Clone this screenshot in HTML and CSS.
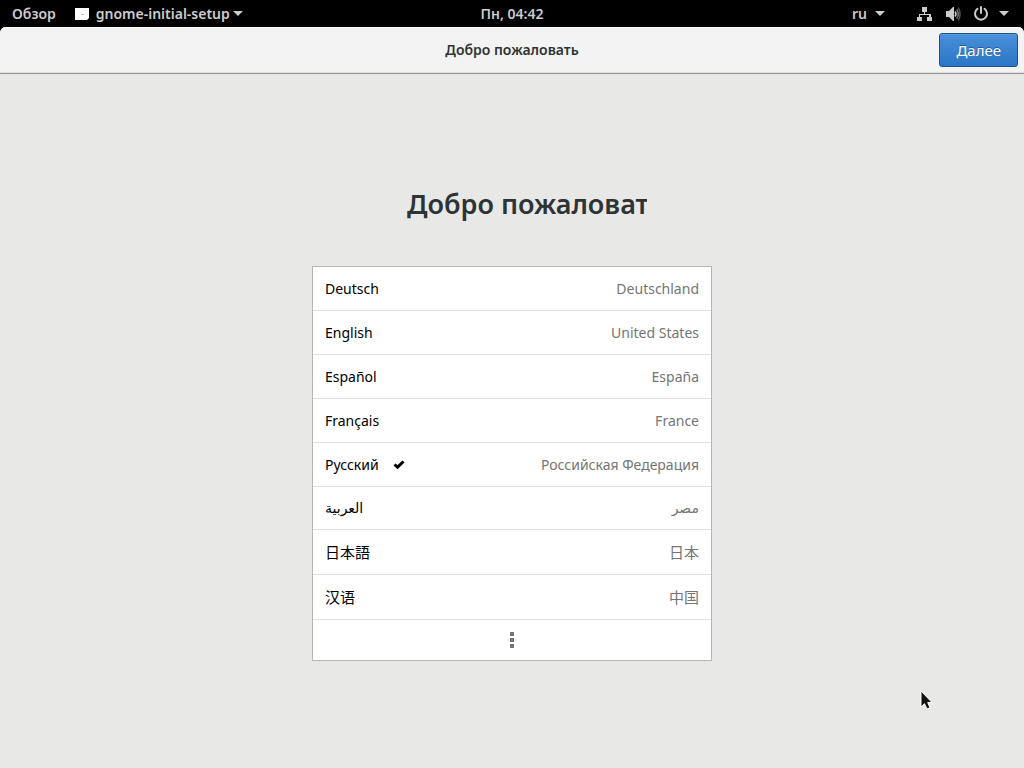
FILE: index.html
```html
<!DOCTYPE html>
<html lang="ru">
<head>
<meta charset="utf-8">
<title>Добро пожаловать</title>
<meta name="viewport" content="width=device-width, initial-scale=1">
<link rel="stylesheet" href="styles.css">
</head>
<body>
<nav class="panel">
  <div class="panel-group panel-left">
    <button class="panel-button" type="button">Обзор</button>
    <button class="panel-button app-menu" type="button">
      <svg class="app-icon" viewBox="0 0 14 12" width="14" height="12" aria-hidden="true"><path d="M0 0h14v10l-2 2H0z" fill="#fff"/><path d="M6 6h3v1H6z" fill="#bbb"/></svg>
      <span>gnome-initial-setup</span>
      <svg class="arrow" viewBox="0 0 10 5" width="10" height="5" aria-hidden="true"><path d="M0 0h10L5 5z"/></svg>
    </button>
  </div>
  <button class="panel-button clock" type="button">Пн, 04:42</button>
  <div class="panel-group panel-right">
    <button class="panel-button keyboard" type="button">
      <span>ru</span>
      <svg class="arrow" viewBox="0 0 10 5" width="10" height="5" aria-hidden="true"><path d="M0 0h10L5 5z"/></svg>
    </button>
    <button class="panel-button status" type="button" aria-label="Система">
      <svg viewBox="0 0 16 16" width="16" height="16" aria-hidden="true"><path d="M5 1h5v5H8v2h6v3h1v4h-5v-4h2V9H3v2h2v4H0v-4h2V8h5V6H5z"/></svg>
      <svg viewBox="0 0 16 16" width="16" height="16" aria-hidden="true"><path d="M1 5h3l4-4h1v14H8l-4-4H1z"/><path d="M10 5.500q2 2.500 0 5" fill="none" stroke="#ccc" stroke-width="1.500"/><path d="M11.800 3.500q3 4.500 0 9" fill="none" stroke="#777" stroke-width="1.500"/><path d="M13.300 1.500q3.500 6.500 0 13" fill="none" stroke="#555" stroke-width="1.500"/></svg>
      <svg viewBox="0 0 16 16" width="16" height="16" aria-hidden="true"><path d="M4.500 2.800a6 6 0 1 0 7 0M8 1v6" fill="none" stroke="#ccc" stroke-width="2" stroke-linecap="round"/></svg>
      <svg class="arrow" viewBox="0 0 10 5" width="10" height="5" aria-hidden="true"><path d="M0 0h10L5 5z"/></svg>
    </button>
  </div>
</nav>
<div class="window">
  <header class="titlebar">
    <div class="title">Добро пожаловать</div>
    <button class="next" type="button">Далее</button>
  </header>
  <main class="page">
    <h1 class="welcome">Добро пожаловать</h1>
    <div class="languages">
      <button class="language" type="button"><span lang="de">Deutsch</span><span class="country" lang="de">Deutschland</span></button>
      <button class="language" type="button"><span lang="en">English</span><span class="country" lang="en">United States</span></button>
      <button class="language" type="button"><span lang="es">Español</span><span class="country" lang="es">España</span></button>
      <button class="language" type="button"><span lang="fr">Français</span><span class="country" lang="fr">France</span></button>
      <button class="language" type="button" aria-pressed="true"><span>Русский</span><svg class="check" viewBox="0 0 12 9" width="12" height="9" aria-hidden="true"><path d="M1.500 4.500l3 2.700 6-5.700" fill="none" stroke="#000" stroke-width="3"/></svg><span class="country">Российская Федерация</span></button>
      <button class="language arabic" type="button"><span lang="ar">العربية</span><span class="country" lang="ar">مصر</span></button>
      <button class="language cjk" type="button"><span lang="ja">日本語</span><span class="country" lang="ja">日本</span></button>
      <button class="language cjk" type="button"><span lang="zh-CN">汉语</span><span class="country" lang="zh-CN">中国</span></button>
      <button class="language more" type="button" aria-label="Ещё"><svg viewBox="0 0 4 16" width="4" height="16" aria-hidden="true"><path d="M0 0h4v4H0zM0 6h4v4H0zM0 12h4v4H0z"/></svg></button>
    </div>
  </main>
</div>
<svg class="pointer" viewBox="0 0 14 22" width="14" height="22" aria-hidden="true"><path d="M1 1v16l3.500-3.300L7 19l3-1.300L7.700 12.500H12z" fill="#111" stroke="#fff"/></svg>
</body>
</html>
```
FILE: styles.css
```css
* {
  box-sizing: border-box;
}

body {
  margin: 0;
  min-height: 100vh;
  display: flex;
  flex-direction: column;
  background: #000;
  color: #2e3436;
  font-family: "Noto Sans", "DejaVu Sans", "Noto Sans CJK SC", sans-serif;
  font-size: 14px;
  line-height: 20px;
}

button {
  margin: 0;
  font: inherit;
  color: inherit;
  background: none;
  border: 0;
}

.panel {
  display: grid;
  grid-template-columns: 1fr auto 1fr;
  align-items: center;
  height: 27px;
  color: #ccc;
  fill: #ccc;
  font-weight: 600;
}

.panel-group {
  display: flex;
  align-items: center;
}

.panel-left {
  padding-left: 12px;
  gap: 19px;
}

.panel-right {
  justify-content: flex-end;
  padding-right: 15px;
  gap: 32px;
}

.panel-button {
  display: flex;
  align-items: center;
  padding: 0;
}

.app-icon {
  margin-right: 7px;
}

.app-menu .arrow {
  margin-left: 3px;
}

.keyboard {
  gap: 8px;
}

.status {
  gap: 12px;
}

.status .arrow {
  margin-left: -2px;
}

.window {
  flex: 1;
  display: flex;
  flex-direction: column;
  background: #e8e8e6;
  border-radius: 6px 6px 0 0;
  overflow: hidden;
}

.titlebar {
  display: grid;
  grid-template-columns: 1fr auto 1fr;
  align-items: center;
  height: 47px;
  padding: 0 6px;
  background: #f3f3f3;
  border-bottom: 1px solid #92928e;
  box-shadow: inset 0 1px #fff, inset 0 -1px #e0e0de;
}

.title {
  grid-column: 2;
  font-weight: 600;
}

.next {
  justify-self: end;
  height: 34px;
  padding: 0 16px;
  color: #fff;
  font-size: 15px;
  background: linear-gradient(#4a90d9, #2a76c6);
  border: 1px solid #1c5187;
  border-radius: 3px;
  box-shadow: inset 0 1px #5b9cde;
  text-shadow: 0 -1px #1f5c99;
}

.page {
  flex: 1;
  display: flex;
  flex-direction: column;
  align-items: center;
  padding: 110px 16px 16px;
}

.welcome {
  width: 270px;
  margin: 0 0 42px;
  padding-left: 30px;
  overflow: hidden;
  white-space: nowrap;
  font-size: 27px;
  font-weight: 600;
  line-height: 40px;
}

.languages {
  width: 100%;
  max-width: 400px;
  background: #fff;
  border: 1px solid #b6b6b3;
}

.language {
  display: flex;
  align-items: center;
  width: 100%;
  height: 44px;
  padding: 0 12px;
  color: #000;
  border-bottom: 1px solid #e2e2e2;
}

.country {
  margin-left: auto;
  color: #757575;
}

.check {
  margin-left: 14px;
}

.arabic {
  height: 43px;
}

.cjk {
  height: 45px;
  font-size: 15px;
}

.more {
  height: 40px;
  justify-content: center;
  border-bottom: 0;
  fill: #757575;
}

.pointer {
  position: absolute;
  left: 920px;
  top: 690px;
}
```
